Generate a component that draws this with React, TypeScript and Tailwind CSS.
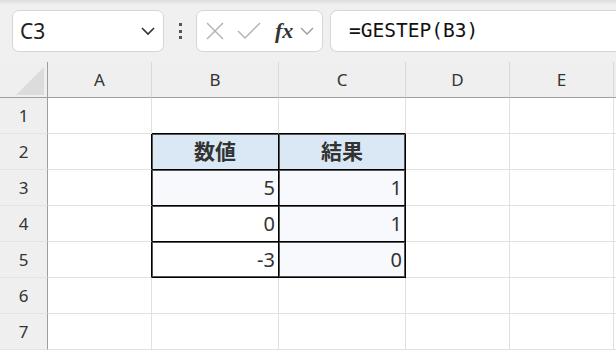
import React from "react";

const cols = ["A", "B", "C", "D", "E"];

type Cell = { text?: string; align?: "left" | "right" | "center"; bold?: boolean; bg?: string; br?: boolean; bb?: boolean; sh?: string };

function getCell(r: number, c: number): Cell {
  const cell: Cell = {};
  if (r >= 2 && r <= 5 && c === 0) cell.br = true;
  if (r >= 2 && r <= 5 && (c === 1 || c === 2)) {
    cell.br = true;
    cell.bb = true;
    if (c === 1 && r < 5) cell.sh = "shadow-[inset_1px_1px_0_#555]";
    if (c === 1 && r === 5) cell.sh = "shadow-[inset_1px_1px_0_#555,inset_0_-1px_0_#555]";
    if (c === 2 && r < 5) cell.sh = "shadow-[inset_1px_1px_0_#555,inset_-1px_0_0_#555]";
    if (c === 2 && r === 5) cell.sh = "shadow-[inset_1px_1px_0_#555,inset_-1px_-1px_0_#555]";
  }
  if (r === 1 && (c === 1 || c === 2)) cell.bb = true;
  if (r === 2 && c === 1) Object.assign(cell, { text: "数値", align: "center", bold: true, bg: "bg-[#dae8f6]" });
  if (r === 2 && c === 2) Object.assign(cell, { text: "結果", align: "center", bold: true, bg: "bg-[#dae8f6]" });
  const data: Record<number, [string, string]> = { 3: ["5", "1"], 4: ["0", "1"], 5: ["-3", "0"] };
  if (data[r] && c === 1) Object.assign(cell, { text: data[r][0], align: "right", bg: r === 3 ? "bg-[#f7f9fc]" : "bg-white" });
  if (data[r] && c === 2) Object.assign(cell, { text: data[r][1], align: "right", bg: "bg-[#f7f9fc]" });
  return cell;
}

export default function App() {
  const rows = [1, 2, 3, 4, 5, 6, 7];
  return (
    <div className="w-[616px] h-[352px] overflow-hidden bg-white flex flex-col" style={{ fontFamily: '"Noto Sans", "Noto Sans CJK JP", sans-serif' }}>
      {/* toolbar */}
      <div className="h-[62px] shrink-0 bg-[#f0f0f0] bg-gradient-to-b from-[#dcdcdc] via-[#f0f0f0] via-[8%] to-[#f0f0f0] flex items-center pl-[12px]">
        <div className="w-[152px] h-[42px] rounded-[7px] border border-[#d6d6d6] bg-white flex items-center justify-between pl-[7px] pr-[7px]">
          <span className="text-[21px] text-[#222] leading-none">C3</span>
          <svg width="16" height="10" viewBox="0 0 16 10">
            <path d="M2 2 L8 8 L14 2" fill="none" stroke="#333" strokeWidth="1.6" />
          </svg>
        </div>
        <div className="w-[32px] flex flex-col items-center gap-[3.5px]">
          <div className="w-[3px] h-[3px] bg-[#555]" />
          <div className="w-[3px] h-[3px] bg-[#555]" />
          <div className="w-[3px] h-[3px] bg-[#555]" />
        </div>
        <div className="w-[127px] h-[42px] rounded-[7px] border border-[#d6d6d6] bg-white flex items-center pl-[8px]">
          <svg width="20" height="20" viewBox="0 0 20 20">
            <path d="M2 2 L18 18 M18 2 L2 18" stroke="#b4b4b4" strokeWidth="1.5" fill="none" />
          </svg>
          <svg width="24" height="18" viewBox="0 0 24 18" className="ml-[12px]">
            <path d="M1 9 L8 16 L23 1" stroke="#b4b4b4" strokeWidth="1.5" fill="none" />
          </svg>
          <span className="ml-[14px] text-[22px] italic font-bold text-[#333] leading-none" style={{ fontFamily: '"Liberation Serif", "DejaVu Serif", serif' }}>fx</span>
          <svg width="16" height="10" viewBox="0 0 16 10" className="ml-[6px]">
            <path d="M2 2 L8 8 L14 2" fill="none" stroke="#999" strokeWidth="1.3" />
          </svg>
        </div>
        <div className="ml-[7px] flex-1 h-[42px] rounded-l-[7px] border border-r-0 border-[#d6d6d6] bg-white flex items-center pl-[18px]">
          <span className="text-[19.5px] text-[#111] leading-none" style={{ fontFamily: '"DejaVu Sans Mono", monospace' }}>=GESTEP(B3)</span>
        </div>
      </div>
      {/* grid */}
      <div className="grid grid-cols-[48px_104px_127px_127px_104px_104px_1fr] grid-rows-[36px_repeat(7,36px)]">
        <div className="relative bg-[#efefef] border-r border-b border-[#9e9e9e]">
          <svg className="absolute left-[16px] top-[5px]" width="29" height="29" viewBox="0 0 29 29">
            <path d="M28 0 L28 28 L0 28 Z" fill="#dcdcdc" />
          </svg>
        </div>
        {cols.map((c) => (
          <div key={c} className="bg-[#efefef] border-r border-[#dadada] border-b-[#9e9e9e] border-b flex items-center justify-center text-[17px] text-[#333]">
            {c}
          </div>
        ))}
        <div className="bg-[#efefef] border-b border-[#9e9e9e]" />
        {rows.map((r) => (
          <React.Fragment key={r}>
            <div className="bg-[#efefef] border-r border-r-[#9e9e9e] border-b border-b-[#e3e3e3] flex items-center justify-center text-[17px] text-[#333]">
              {r}
            </div>
            {[0, 1, 2, 3, 4, 5].map((c) => {
              const cell = getCell(r, c);
              const br = c === 5 ? "" : cell.br ? "border-r border-r-black" : "border-r border-r-[#e1e1e1]";
              const bb = cell.bb ? "border-b border-b-black" : "border-b border-b-[#e1e1e1]";
              const align = cell.align === "center" ? "justify-center" : cell.align === "right" ? "justify-end pr-[3px]" : "justify-start";
              return (
                <div
                  key={c}
                  className={`${br} ${bb} ${cell.sh ?? ""} ${cell.bg ?? "bg-white"} flex items-center ${align} ${cell.bold ? "font-bold text-[21px] text-[#333]" : "text-[20px] text-[#333]"}`}
                >
                  {cell.text}
                </div>
              );
            })}
          </React.Fragment>
        ))}
      </div>
    </div>
  );
}
